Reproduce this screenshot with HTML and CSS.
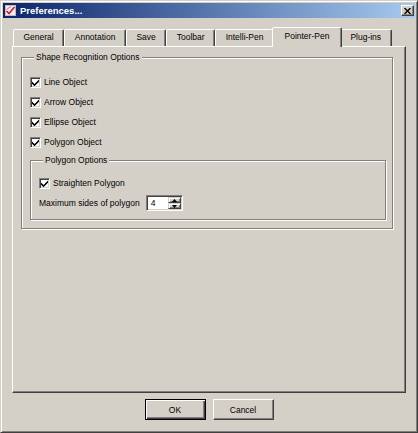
FILE: index.html
```html
<!DOCTYPE html>
<html>
<head>
<meta charset="utf-8">
<link rel="stylesheet" href="styles.css">
</head>
<body>
<div class="window">
  <div class="titlebar">
    <svg class="app-icon" width="11" height="11" viewBox="0 0 11 11">
      <rect x="0.5" y="0.5" width="10" height="10" fill="#f4eef0" stroke="#c8b8c0"/>
      <path d="M1.5 6 L4 8.5 L9.5 2" fill="none" stroke="#d81830" stroke-width="1.6"/>
      <path d="M6 1.5 L1.5 4.5" fill="none" stroke="#e86880" stroke-width="1"/>
    </svg>
    <span class="title">Preferences...</span>
    <div class="close">
      <svg width="7" height="6" viewBox="0 0 7 6"><path d="M0.5 0 L6.5 6 M6.5 0 L0.5 6" stroke="#000" stroke-width="1.4"/></svg>
    </div>
  </div>
  <div class="body">
    <div class="tabs">
      <div class="tab">General</div>
      <div class="tab">Annotation</div>
      <div class="tab">Save</div>
      <div class="tab">Toolbar</div>
      <div class="tab">Intelli-Pen</div>
      <div class="tab active">Pointer-Pen</div>
      <div class="tab">Plug-ins</div>
    </div>
    <div class="panel">
      <fieldset class="group">
        <legend>Shape Recognition Options</legend>
        <div class="group-body">
          <label class="check"><span class="box"><svg width="7" height="7" viewBox="0 0 7 7"><path d="M0 2.5 L2.5 5 L7 0.5 L7 2.8 L2.5 7.2 L0 4.8 Z" fill="#000"/></svg></span>Line Object</label>
          <label class="check"><span class="box"><svg width="7" height="7" viewBox="0 0 7 7"><path d="M0 2.5 L2.5 5 L7 0.5 L7 2.8 L2.5 7.2 L0 4.8 Z" fill="#000"/></svg></span>Arrow Object</label>
          <label class="check"><span class="box"><svg width="7" height="7" viewBox="0 0 7 7"><path d="M0 2.5 L2.5 5 L7 0.5 L7 2.8 L2.5 7.2 L0 4.8 Z" fill="#000"/></svg></span>Ellipse Object</label>
          <label class="check"><span class="box"><svg width="7" height="7" viewBox="0 0 7 7"><path d="M0 2.5 L2.5 5 L7 0.5 L7 2.8 L2.5 7.2 L0 4.8 Z" fill="#000"/></svg></span>Polygon Object</label>
          <fieldset class="group inner">
            <legend>Polygon Options</legend>
            <div class="group-body">
              <label class="check"><span class="box"><svg width="7" height="7" viewBox="0 0 7 7"><path d="M0 2.5 L2.5 5 L7 0.5 L7 2.8 L2.5 7.2 L0 4.8 Z" fill="#000"/></svg></span>Straighten Polygon</label>
              <div class="field-row">
                <span>Maximum sides of polygon</span>
                <div class="spin">
                  <span class="spin-value">4</span>
                  <div class="spin-btns">
                    <span class="spin-btn"><svg width="5" height="3" viewBox="0 0 5 3"><path d="M2.5 0 L5 3 L0 3 Z" fill="#000"/></svg></span>
                    <span class="spin-btn"><svg width="5" height="3" viewBox="0 0 5 3"><path d="M0 0 L5 0 L2.5 3 Z" fill="#000"/></svg></span>
                  </div>
                </div>
              </div>
            </div>
          </fieldset>
        </div>
      </fieldset>
    </div>
    <div class="buttons">
      <button class="btn default">OK</button>
      <button class="btn">Cancel</button>
    </div>
  </div>
</div>
</body>
</html>
```

FILE: styles.css
```css
* { box-sizing: border-box; }
html, body { margin: 0; padding: 0; }
body {
  background: #d4d0c8;
  font-family: "Liberation Sans", Arial, sans-serif;
  font-size: 8.5px;
  color: #000;
}
.window {
  width: 418px;
  height: 433px;
  display: flex;
  flex-direction: column;
  padding: 2px;
  background: #d4d0c8;
  border: 1px solid;
  border-color: #d4d0c8 #404040 #404040 #d4d0c8;
  box-shadow: inset 1px 1px #fff, inset -1px -1px #808080;
}
.titlebar {
  height: 15px;
  display: flex;
  align-items: center;
  padding-left: 2px;
  background: linear-gradient(to right, #0a246a, #a6caf0);
}
.app-icon { flex: none; }
.title {
  margin-left: 4px;
  color: #fff;
  font-weight: bold;
  font-size: 9.5px;
}
.close {
  margin-left: auto;
  margin-right: 1px;
  width: 13px;
  height: 11px;
  display: flex;
  align-items: center;
  justify-content: center;
  background: #d4d0c8;
  border: 1px solid;
  border-color: #fff #404040 #404040 #fff;
  box-shadow: inset -1px -1px #808080;
}
.body {
  flex: 1;
  display: flex;
  flex-direction: column;
  padding: 0 9px;
}
.tabs {
  height: 28px;
  padding: 9px 0 0 1px;
  display: flex;
  align-items: flex-end;
  position: relative;
  z-index: 1;
}
.tab {
  height: 17px;
  line-height: 15px;
  padding: 0 9.5px;
  border: 1px solid;
  border-bottom: none;
  border-color: #fff #404040 transparent #fff;
  border-radius: 2px 2px 0 0;
  box-shadow: inset -1px 0 #808080;
  background: #d4d0c8;
  white-space: nowrap;
}
.tab.active {
  height: 20px;
  line-height: 17px;
  padding: 0 11.5px;
  margin: 0 -2px -1px;
  position: relative;
  z-index: 2;
}
.panel {
  flex: 1;
  padding: 5px 12px 0 8px;
  border: 1px solid;
  border-color: #fff #404040 #404040 #fff;
  box-shadow: inset -1px -1px #808080;
}
.group {
  margin: 0;
  padding: 0 6px 8px 8px;
  border: 1px solid #808080;
  box-shadow: inset 1px 1px #fff, 1px 1px #fff;
  min-width: 0;
}
.group legend {
  margin-left: 4px;
  padding: 0 2px;
  line-height: 11px;
  background: #d4d0c8;
}
.group-body { padding-top: 9px; }
.check {
  display: flex;
  align-items: center;
  height: 20px;
}
.box {
  width: 11px;
  height: 11px;
  margin-right: 3px;
  display: flex;
  align-items: center;
  justify-content: center;
  background: #fff;
  border: 1px solid;
  border-color: #808080 #fff #fff #808080;
  box-shadow: inset 1px 1px #404040, inset -1px -1px #d4d0c8;
}
.inner {
  margin-top: 3px;
  padding: 0 8px 6px 8px;
}
.inner .group-body { padding-top: 7px; }
.field-row {
  display: flex;
  align-items: center;
  height: 20px;
}
.spin {
  display: flex;
  width: 37px;
  height: 16px;
  margin-left: 6px;
  background: #fff;
  border: 1px solid;
  border-color: #808080 #fff #fff #808080;
  box-shadow: inset 1px 1px #404040, inset -1px -1px #d4d0c8;
  padding: 1px;
}
.spin-value {
  flex: 1;
  padding-left: 3px;
  line-height: 12px;
}
.spin-btns {
  width: 13px;
  display: flex;
  flex-direction: column;
}
.spin-btn {
  flex: 1;
  display: flex;
  align-items: center;
  justify-content: center;
  background: #d4d0c8;
  border: 1px solid;
  border-color: #d4d0c8 #404040 #404040 #d4d0c8;
  box-shadow: inset 1px 1px #fff, inset -1px -1px #808080;
}
.buttons {
  display: flex;
  justify-content: center;
  gap: 7px;
  padding: 6px 0 10px;
}
.btn {
  width: 61px;
  height: 21px;
  margin: 0;
  padding: 0;
  font: inherit;
  color: #000;
  background: #d4d0c8;
  border: 1px solid;
  border-color: #fff #404040 #404040 #fff;
  box-shadow: inset -1px -1px #808080;
}
.btn.default {
  border-color: #000;
  box-shadow: inset 1px 1px #fff, inset -1px -1px #404040, inset -2px -2px #808080;
}
```
